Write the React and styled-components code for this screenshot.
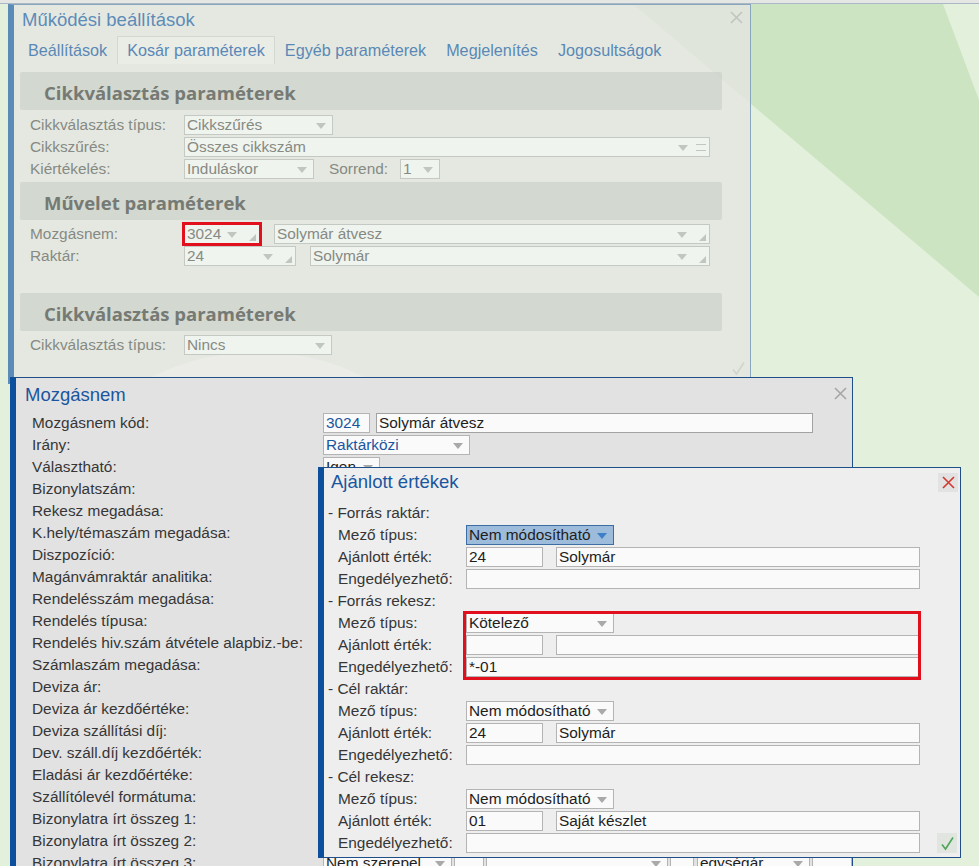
import React from 'react';
import styled, { createGlobalStyle, ThemeProvider, css } from 'styled-components';

const GlobalStyle = createGlobalStyle`
  body {
    margin: 0;
    font-family: "Liberation Sans", Arial, sans-serif;
    overflow: hidden;
  }
`;

// colour sets: the settings window is inactive and washed out
const faded = {
  bg: 'rgba(229, 230, 226, 0.78)',
  edge: '#8aa6bd',
  bar: '#5b8cb8',
  title: '#5d8cb9',
  label: '#868a84',
  fieldBg: '#f0f4ee',
  fieldBorder: '#c5c9c3',
  fieldText: '#868a84',
  arrow: '#c2c6c0',
  close: '#c0c4be',
};

const active = {
  bg: '#e2e2e2',
  edge: '#1f4f88',
  bar: '#0b4f9d',
  title: '#1a56a0',
  label: '#363636',
  fieldBg: '#fafafa',
  fieldBorder: '#b4b4b4',
  fieldText: '#1e1e1e',
  arrow: '#a9a9a9',
  close: '#a6a6a6',
};

const front = { ...active, bg: '#eeeeee' };

const Desktop = styled.div`
  position: relative;
  width: 979px;
  height: 866px;
  overflow: hidden;
  background: #e3f0dc;
`;

const Wallpaper = styled.svg`
  position: absolute;
  left: 0;
  top: 0;
`;

const Window = styled.section`
  position: absolute;
  left: ${p => p.$x}px;
  top: ${p => p.$y}px;
  width: ${p => p.$w}px;
  height: ${p => p.$h}px;
  box-sizing: border-box;
  background: ${p => p.theme.bg};
  border: 1px solid ${p => p.theme.edge};
  border-left: 6px solid ${p => p.theme.bar};
  display: flex;
  flex-direction: column;
  overflow: hidden;
`;

const TitleBar = styled.header`
  flex: none;
  display: flex;
  align-items: center;
  justify-content: space-between;
  box-sizing: border-box;
  height: ${p => p.$h}px;
  padding: 0 ${p => p.$pr}px ${p => p.$pb || 0}px ${p => p.$pl}px;
`;

const Title = styled.h1`
  margin: 0;
  font-size: 18.5px;
  font-weight: 400;
  color: ${p => p.theme.title};
`;

const CloseBox = styled.span`
  display: flex;
  align-items: center;
  justify-content: center;
  width: 20px;
  height: 19px;
  margin-top: ${p => p.$mt || 0}px;
  background: ${p => (p.$boxed ? '#e2e2e2' : 'transparent')};
`;

const CloseX = ({ color, boxed, mt }) => (
  <CloseBox $boxed={boxed} $mt={mt}>
    <svg width="13" height="13" viewBox="0 0 13 13">
      <path d="M1 1 L12 12 M12 1 L1 12" stroke={color} strokeWidth="1.6" fill="none" />
    </svg>
  </CloseBox>
);

const Tabs = styled.nav`
  display: flex;
  height: 28px;
  margin: 2px 0 0 4px;
`;

const Tab = styled.span`
  box-sizing: border-box;
  padding: 0 9px;
  line-height: 26px;
  font-size: 16.2px;
  color: #5a88b6;
  border: 1px solid transparent;
  border-bottom: 0;
  ${p =>
    p.$active &&
    css`
      border-color: #d2d7d1;
      background: rgba(236, 239, 234, 0.6);
    `}
`;

const Panel = styled.div`
  padding: 8px 28px 0 6px;
`;

const Band = styled.h2`
  box-sizing: border-box;
  height: 38px;
  margin: ${p => p.$mt || 0}px 0 0;
  padding: 3px 0 0 24px;
  display: flex;
  align-items: center;
  border-radius: 2px;
  background: rgba(204, 209, 201, 0.72);
  font-family: "Open Sans", "Liberation Sans", sans-serif;
  font-size: 18.5px;
  font-weight: 700;
  color: #767a74;
`;

const Rows = styled.div`
  padding: ${p => p.$pt || 0}px 0 0 ${p => p.$indent || 0}px;
  display: flex;
  flex-direction: column;
`;

const Row = styled.div`
  display: flex;
  align-items: center;
  height: 22px;
  padding-left: ${p => p.$indent || 0}px;
`;

const Label = styled.span`
  flex: none;
  width: ${p => p.$w}px;
  margin-left: ${p => p.$gap || 0}px;
  font-size: 15.4px;
  color: ${p => p.theme.label};
  white-space: nowrap;
`;

const Field = styled.div`
  box-sizing: border-box;
  flex: none;
  width: ${p => p.$w}px;
  height: 20px;
  margin-left: ${p => p.$gap || 0}px;
  display: flex;
  align-items: center;
  padding: 0 3px 0 2px;
  border: 1px solid ${p => (p.$hot ? '#3c6da3' : p.$dark ? '#a2a2a2' : p.theme.fieldBorder)};
  background: ${p => (p.$hot ? '#9dbbda' : p.theme.fieldBg)};
  color: ${p => (p.$blue ? p.theme.title : p.theme.fieldText)};
  font-size: 15.4px;
  white-space: nowrap;
  overflow: hidden;
  ${p =>
    p.$marked &&
    css`
      outline: 3px solid #e2101c;
      outline-offset: -1px;
    `}
`;

const Value = styled.span`
  flex: 1;
  overflow: hidden;
`;

const Caret = styled.i`
  flex: none;
  width: 0;
  height: 0;
  margin: 1px 3px 0 4px;
  border-left: 5px solid transparent;
  border-right: 5px solid transparent;
  border-top: 6px solid ${p => (p.$hot ? '#3e80c8' : p.theme.arrow)};
`;

const Grip = styled.i`
  flex: none;
  width: 0;
  height: 0;
  margin: 6px 0 0 9px;
  border-left: 7px solid transparent;
  border-bottom: 7px solid ${p => p.theme.arrow};
`;

const Equals = styled.i`
  flex: none;
  width: 10px;
  height: 5px;
  margin-left: 5px;
  border-top: 1px solid ${p => p.theme.arrow};
  border-bottom: 1px solid ${p => p.theme.arrow};
`;

const Section = styled.div`
  padding-left: 4px;
  height: 22px;
  display: flex;
  align-items: center;
  font-size: 15.4px;
  color: ${p => p.theme.label};
`;

const Annotation = styled.div`
  position: absolute;
  left: ${p => p.$x}px;
  top: ${p => p.$y}px;
  width: ${p => p.$w}px;
  height: ${p => p.$h}px;
  box-sizing: border-box;
  border: 3px solid #e2101c;
  pointer-events: none;
`;

const CheckBox = styled.span`
  display: flex;
  align-items: center;
  justify-content: center;
  width: 20px;
  height: 20px;
  margin-left: ${p => p.$gap || 0}px;
  background: ${p => (p.$boxed ? '#e0e5e0' : 'transparent')};
`;

const FadedCheck = styled.span`
  position: absolute;
  right: 4px;
  top: 356px;
`;

const Check = ({ color }) => (
  <svg width="15" height="15" viewBox="0 0 15 15">
    <path d="M2 8.5 L5.5 13 L13 1.5" stroke={color} strokeWidth="1.6" fill="none" />
  </svg>
);

const Body = styled.div`
  position: relative;
  flex: 1;
`;

const tabs = ['Beállítások', 'Kosár paraméterek', 'Egyéb paraméterek', 'Megjelenítés', 'Jogosultságok'];

const SettingsWindow = () => (
  <Window $x={8} $y={4} $w={743} $h={380}>
    <TitleBar $h={29} $pl={8} $pr={4}>
      <Title>Működési beállítások</Title>
      <CloseX color={faded.close} mt={-4} />
    </TitleBar>
    <Tabs>
      {tabs.map(t => (
        <Tab key={t} $active={t === 'Kosár paraméterek'}>
          {t}
        </Tab>
      ))}
    </Tabs>
    <Panel>
      <Band>Cikkválasztás paraméterek</Band>
      <Rows $pt={4} $indent={10}>
        <Row>
          <Label $w={154}>Cikkválasztás típus:</Label>
          <Field $w={149}>
            <Value>Cikkszűrés</Value>
            <Caret />
          </Field>
        </Row>
        <Row>
          <Label $w={154}>Cikkszűrés:</Label>
          <Field $w={526}>
            <Value>Összes cikkszám</Value>
            <Caret />
            <Equals />
          </Field>
        </Row>
        <Row>
          <Label $w={154}>Kiértékelés:</Label>
          <Field $w={130}>
            <Value>Induláskor</Value>
            <Caret />
          </Field>
          <Label $w={71} $gap={15}>
            Sorrend:
          </Label>
          <Field $w={40}>
            <Value>1</Value>
            <Caret />
          </Field>
        </Row>
      </Rows>
      <Band $mt={2}>Művelet paraméterek</Band>
      <Rows $pt={3} $indent={10}>
        <Row>
          <Label $w={154}>Mozgásnem:</Label>
          <Field $w={76} $marked>
            <Value>3024</Value>
            <Caret />
            <Grip />
          </Field>
          <Field $w={436} $gap={14}>
            <Value>Solymár átvesz</Value>
            <Caret />
            <Grip />
          </Field>
        </Row>
        <Row>
          <Label $w={154}>Raktár:</Label>
          <Field $w={112}>
            <Value>24</Value>
            <Caret />
            <Grip />
          </Field>
          <Field $w={400} $gap={14}>
            <Value>Solymár</Value>
            <Caret />
            <Grip />
          </Field>
        </Row>
      </Rows>
      <Band $mt={26}>Cikkválasztás paraméterek</Band>
      <Rows $pt={3} $indent={10}>
        <Row>
          <Label $w={154}>Cikkválasztás típus:</Label>
          <Field $w={148}>
            <Value>Nincs</Value>
            <Caret />
          </Field>
        </Row>
      </Rows>
    </Panel>
    <FadedCheck>
      <Check color="#cfd4cc" />
    </FadedCheck>
  </Window>
);

const moveLabels = [
  'Mozgásnem kód:',
  'Irány:',
  'Választható:',
  'Bizonylatszám:',
  'Rekesz megadása:',
  'K.hely/témaszám megadása:',
  'Diszpozíció:',
  'Magánvámraktár analitika:',
  'Rendelésszám megadása:',
  'Rendelés típusa:',
  'Rendelés hiv.szám átvétele alapbiz.-be:',
  'Számlaszám megadása:',
  'Deviza ár:',
  'Deviza ár kezdőértéke:',
  'Deviza szállítási díj:',
  'Dev. száll.díj kezdőérték:',
  'Eladási ár kezdőértéke:',
  'Szállítólevél formátuma:',
  'Bizonylatra írt összeg 1:',
  'Bizonylatra írt összeg 2:',
  'Bizonylatra írt összeg 3:',
];

const moveValues = {
  0: (
    <>
      <Field $w={47} $blue>
        <Value>3024</Value>
      </Field>
      <Field $w={437} $gap={6} $dark>
        <Value>Solymár átvesz</Value>
      </Field>
    </>
  ),
  1: (
    <Field $w={147} $blue>
      <Value>Raktárközi</Value>
      <Caret />
    </Field>
  ),
  2: (
    <Field $w={57}>
      <Value>Igen</Value>
      <Caret />
    </Field>
  ),
  20: (
    <>
      <Field $w={129}>
        <Value>Nem szerepel</Value>
        <Caret />
      </Field>
      <Field $w={30} $gap={2} />
      <Field $w={182} $gap={2}>
        <Value />
        <Caret />
      </Field>
      <Field $w={24} $gap={2} />
      <Field $w={113} $gap={3}>
        <Value>egységár</Value>
        <Caret />
      </Field>
      <Field $w={40} $gap={2} />
    </>
  ),
};

const MoveWindow = () => (
  <Window $x={10} $y={377} $w={843} $h={520}>
    <TitleBar $h={34} $pl={9} $pr={2}>
      <Title>Mozgásnem</Title>
      <CloseX color={active.close} mt={-4} />
    </TitleBar>
    <Rows $indent={16}>
      {moveLabels.map((l, i) => (
        <Row key={l}>
          <Label $w={291}>{l}</Label>
          {moveValues[i]}
        </Row>
      ))}
    </Rows>
  </Window>
);

const groups = [
  {
    name: '- Forrás raktár:',
    type: 'Nem módosítható',
    hot: true,
    code: '24',
    text: 'Solymár',
    allow: '',
  },
  { name: '- Forrás rekesz:', type: 'Kötelező', code: '', text: '', allow: '*-01' },
  { name: '- Cél raktár:', type: 'Nem módosítható', code: '24', text: 'Solymár', allow: '' },
  { name: '- Cél rekesz:', type: 'Nem módosítható', code: '01', text: 'Saját készlet', allow: '' },
];

const OfferWindow = () => (
  <Window $x={318} $y={467} $w={643} $h={391}>
    <TitleBar $h={34} $pl={7} $pr={2} $pb={6}>
      <Title>Ajánlott értékek</Title>
      <CloseX color="#d2382e" boxed />
    </TitleBar>
    <Body>
      {groups.map((g, i) => (
        <React.Fragment key={g.name}>
          <Section>{g.name}</Section>
          <Row $indent={14}>
            <Label $w={128}>Mező típus:</Label>
            <Field $w={148} $hot={g.hot}>
              <Value>{g.type}</Value>
              <Caret $hot={g.hot} />
            </Field>
          </Row>
          <Row $indent={14}>
            <Label $w={128}>Ajánlott érték:</Label>
            <Field $w={77}>
              <Value>{g.code}</Value>
            </Field>
            <Field $w={364} $gap={13}>
              <Value>{g.text}</Value>
            </Field>
          </Row>
          <Row $indent={14}>
            <Label $w={128}>Engedélyezhető:</Label>
            <Field $w={454}>
              <Value>{g.allow}</Value>
            </Field>
            {i === groups.length - 1 && (
              <CheckBox $gap={17} $boxed>
                <Check color="#4fa55a" />
              </CheckBox>
            )}
          </Row>
        </React.Fragment>
      ))}
      <Annotation $x={139} $y={109} $w={458} $h={69} />
    </Body>
  </Window>
);

export default function App() {
  return (
    <>
      <GlobalStyle />
      <Desktop>
        <Wallpaper width="979" height="866" viewBox="0 0 979 866">
          <polygon points="633,4 943,4 979,100 979,297" fill="#cce4c2" />
          <circle cx="258" cy="591" r="239" fill="#ffffff" />
          <rect x="0" y="0" width="979" height="4" fill="#e4e7e3" />
          <rect x="0" y="3" width="979" height="1" fill="#a9b8c4" />
        </Wallpaper>
        <ThemeProvider theme={faded}>
          <SettingsWindow />
        </ThemeProvider>
        <ThemeProvider theme={active}>
          <MoveWindow />
        </ThemeProvider>
        <ThemeProvider theme={front}>
          <OfferWindow />
        </ThemeProvider>
      </Desktop>
    </>
  );
}
